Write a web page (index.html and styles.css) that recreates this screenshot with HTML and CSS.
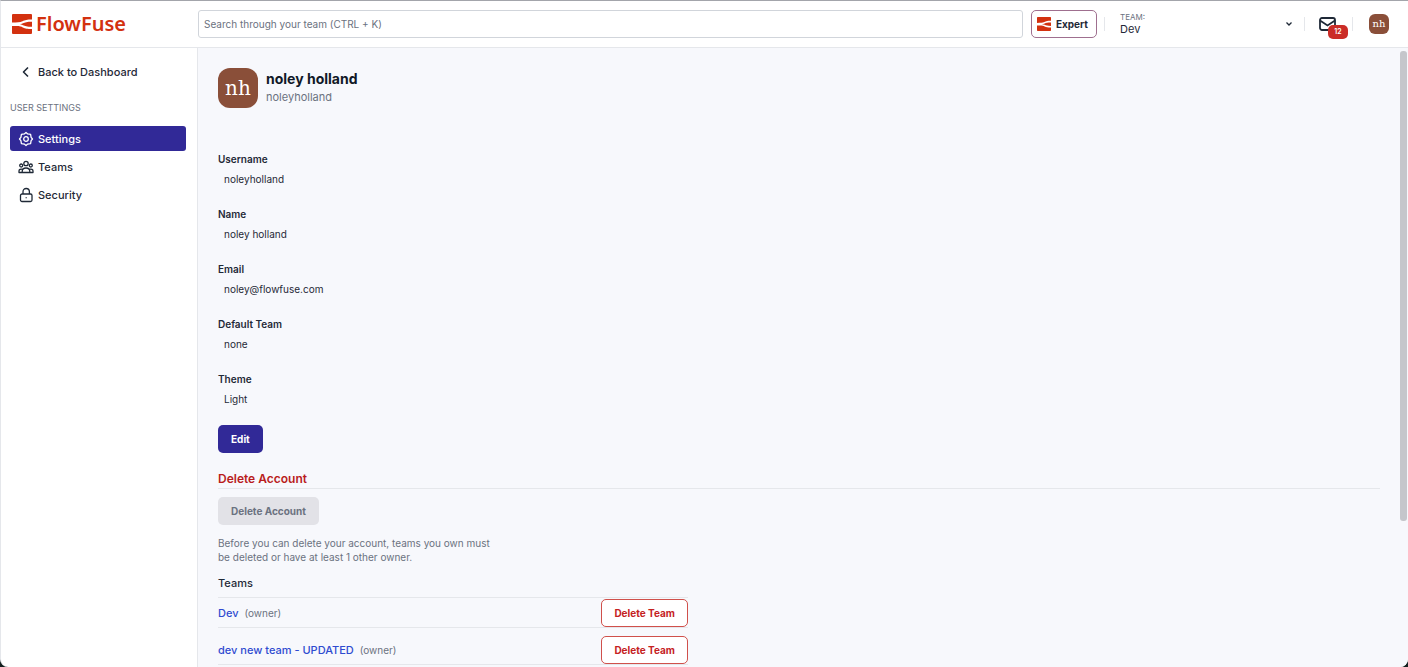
FILE: index.html
```html
<!DOCTYPE html>
<html lang="en">
<head>
  <meta charset="UTF-8" />
  <meta name="viewport" content="width=device-width, initial-scale=1.0" />
  <title>User Settings - FlowFuse</title>
  <link rel="stylesheet" href="styles.css">
</head>
<body>
  <svg class="sprite" aria-hidden="true">
    <symbol id="mark" viewBox="0 0 20 20">
      <path d="M1 0H19Q20 0 20 1V5.500C15 5.500 13 6 10.500 7.300C8 8.500 5 8.500 0 8.500V1Q0 0 1 0Z" />
      <path d="M20 7.800V12.800C15 12.800 13 12 11 11.200C9.500 10.600 8.500 10.400 7 10.300C8.500 10.200 9.500 10 11 9.300C13 8.400 15 7.800 20 7.800Z" />
      <path d="M0 12H4C8 12 9 12.500 11 13.500C13.500 14.800 15 15 20 15V19Q20 20 19 20H1Q0 20 0 19Z" />
    </symbol>
  </svg>

  <div class="app">
    <header class="topbar">
      <a class="logo" href="#">
        <svg class="logo-mark" aria-hidden="true"><use href="#mark" /></svg>
        <span>FlowFuse</span>
      </a>
      <input class="search" type="search" aria-label="Search" placeholder="Search through your team (CTRL + K)" />
      <button class="btn btn-expert" type="button">
        <svg class="expert-mark" aria-hidden="true"><use href="#mark" /></svg>
        Expert
      </button>
      <div class="team-picker">
        <label for="team">TEAM:</label>
        <select id="team">
          <option>Dev</option>
        </select>
        <svg class="chevron" viewBox="0 0 8 8" aria-hidden="true"><path d="M1.500 2.500L4 5L6.500 2.500" /></svg>
      </div>
      <button class="inbox" type="button" aria-label="Notifications">
        <svg viewBox="0 0 18 14" aria-hidden="true">
          <rect x="1" y="1" width="15" height="12" rx="2" />
          <path d="M1 3.500L8.500 8.500L16 3.500" />
        </svg>
        <span class="badge">12</span>
      </button>
      <button class="user-menu" type="button"><span class="avatar avatar-small">nh</span></button>
    </header>

    <div class="content">
      <nav class="sidebar">
        <a class="nav-item back" href="#">
          <svg viewBox="0 0 16 16" aria-hidden="true"><path d="M10 3.500L5.500 8L10 12.500" /></svg>
          Back to Dashboard
        </a>
        <h2>USER SETTINGS</h2>
        <a class="nav-item active" href="#">
          <svg viewBox="0 0 16 16" aria-hidden="true">
            <path d="M8 1.500L9.700 2.900L12.600 3.400L13.100 6.300L14.500 8L13.100 9.700L12.600 12.600L9.700 13.100L8 14.500L6.300 13.100L3.400 12.600L2.900 9.700L1.500 8L2.900 6.300L3.400 3.400L6.300 2.900Z" />
            <circle cx="8" cy="8" r="2.300" />
          </svg>
          Settings
        </a>
        <a class="nav-item" href="#">
          <svg viewBox="0 0 16 16" aria-hidden="true">
            <circle cx="8" cy="4.500" r="2.200" />
            <circle cx="3.200" cy="6.500" r="1.500" />
            <circle cx="12.800" cy="6.500" r="1.500" />
            <path d="M4.200 13.500V12.500C4.200 10.300 5.800 9 8 9S11.800 10.300 11.800 12.500V13.500ZM4.200 13.500H1V12C1 10.500 2.500 9.800 4.600 10.400M11.800 13.500H15V12C15 10.500 13.500 9.800 11.400 10.400" />
          </svg>
          Teams
        </a>
        <a class="nav-item" href="#">
          <svg viewBox="0 0 16 16" aria-hidden="true">
            <rect x="2.500" y="7" width="11.500" height="7.500" rx="1.500" />
            <path d="M5 7V4.700C5 2.700 6.200 1.500 8.200 1.500S11.400 2.700 11.400 4.700V7M8.200 10.200V11.300" />
          </svg>
          Security
        </a>
      </nav>

      <main class="page">
        <div class="profile">
          <span class="avatar">nh</span>
          <div>
            <h1>noley holland</h1>
            <p>noleyholland</p>
          </div>
        </div>

        <dl class="details">
          <div>
            <dt>Username</dt>
            <dd>noleyholland</dd>
          </div>
          <div>
            <dt>Name</dt>
            <dd>noley holland</dd>
          </div>
          <div>
            <dt>Email</dt>
            <dd>noley@flowfuse.com</dd>
          </div>
          <div>
            <dt>Default Team</dt>
            <dd>none</dd>
          </div>
          <div>
            <dt>Theme</dt>
            <dd>Light</dd>
          </div>
        </dl>
        <button class="btn btn-primary" type="button">Edit</button>

        <section class="delete-account">
          <h2>Delete Account</h2>
          <button class="btn" type="button" disabled>Delete Account</button>
          <p>Before you can delete your account, teams you own must be deleted or have at least 1 other owner.</p>
          <div class="teams">
            <h3>Teams</h3>
            <ul>
              <li>
                <a href="#">Dev</a>
                <span class="role">(owner)</span>
                <button class="btn btn-danger" type="button">Delete Team</button>
              </li>
              <li>
                <a href="#">dev new team - UPDATED</a>
                <span class="role">(owner)</span>
                <button class="btn btn-danger" type="button">Delete Team</button>
              </li>
            </ul>
          </div>
        </section>
      </main>
      <div class="scroll-thumb"></div>
    </div>
  </div>
</body>
</html>
```

FILE: styles.css
```css
* {
  box-sizing: border-box;
}

body {
  margin: 0;
  background: #14201f;
  color: #1f2937;
  font-family: Inter, "Liberation Sans", sans-serif;
  font-size: 10px;
  line-height: 14px;
}

h1, h2, h3, p, ul, dl, dd {
  margin: 0;
  padding: 0;
}

a {
  color: inherit;
  text-decoration: none;
}

button, input, select {
  font: inherit;
  color: inherit;
}

button {
  cursor: pointer;
}

.sprite {
  display: none;
}

.app {
  display: flex;
  flex-direction: column;
  height: 100vh;
  overflow: hidden;
  background: #fff;
  border-top: 1px solid #a3a5ab;
  border-left: 1px solid #e5e7eb;
  border-radius: 0 0 8px 8px;
}

/* Top bar */
.topbar {
  display: flex;
  align-items: center;
  height: 47px;
  padding: 0 13px 0 11px;
  border-bottom: 1px solid #e5e7eb;
}

.logo {
  display: flex;
  align-items: center;
  gap: 4px;
  width: 186px;
  color: #d3310f;
  font-family: "Noto Sans", "Open Sans", sans-serif;
  font-size: 20px;
  font-weight: 600;
}

.logo-mark {
  width: 20px;
  height: 20px;
  fill: #d3310f;
}

.search {
  flex: 1;
  height: 28px;
  padding: 0 5px;
  border: 1px solid #d1d5db;
  border-radius: 3px;
  background: #fff;
}

.search::placeholder {
  color: #6b7280;
  opacity: 1;
}

.btn {
  height: 28px;
  padding: 0 12px;
  border: 1px solid transparent;
  border-radius: 5px;
  font-weight: 700;
}

.btn-expert {
  display: flex;
  align-items: center;
  gap: 5px;
  margin-left: 8px;
  padding: 0 8px 0 5px;
  border-color: #9f6f8f;
  background: #fff;
}

.expert-mark {
  width: 14px;
  height: 14px;
  fill: #d3310f;
}

.team-picker {
  position: relative;
  display: flex;
  flex-direction: column;
  width: 200px;
  margin-left: 7px;
  padding-left: 16px;
}

.team-picker label {
  color: #6b7280;
  font-size: 8px;
  line-height: 10px;
}

.team-picker select {
  width: 100%;
  height: 14px;
  padding: 0;
  border: 0;
  background: none;
  appearance: none;
  font-size: 11px;
}

.chevron {
  position: absolute;
  top: 8px;
  right: 11px;
  width: 8px;
  height: 8px;
  fill: none;
  stroke: #1f2937;
  stroke-width: 1.3;
  pointer-events: none;
}

.team-picker,
.inbox,
.user-menu {
  background: linear-gradient(#e5e7eb, #e5e7eb) left center / 1px 14px no-repeat;
}

.inbox {
  position: relative;
  display: flex;
  width: 48px;
  padding: 0 0 0 15px;
  border: 0;
}

.inbox svg {
  width: 18px;
  height: 14px;
  fill: none;
  stroke: #1f2937;
  stroke-width: 1.8;
}

.badge {
  position: absolute;
  top: 8px;
  left: 24px;
  width: 20px;
  border-radius: 5px;
  background: #cb2c27;
  color: #fff;
  font-size: 7px;
  font-weight: 600;
}

.user-menu {
  padding: 0 6px 0 17px;
  border: 0;
}

.avatar {
  display: flex;
  align-items: center;
  justify-content: center;
  width: 40px;
  height: 40px;
  border-radius: 12px;
  background: #8a4f39;
  color: #fff;
  font-family: "DejaVu Serif", serif;
  font-size: 20px;
}

.avatar-small {
  width: 20px;
  height: 20px;
  border-radius: 6px;
  font-size: 10px;
}

/* Sidebar */
.content {
  position: relative;
  display: flex;
  flex: 1;
  min-height: 0;
}

.sidebar {
  display: flex;
  flex-direction: column;
  gap: 3px;
  width: 197px;
  padding: 11px 11px 0 9px;
  border-right: 1px solid #e5e7eb;
}

.sidebar h2 {
  margin: 14px 0 8px;
  color: #6b7280;
  font-size: 9px;
  font-weight: 400;
}

.nav-item {
  display: flex;
  align-items: center;
  gap: 4px;
  height: 25px;
  padding: 0 8px;
  border-radius: 3px;
  font-size: 11px;
  font-weight: 500;
}

.nav-item svg {
  width: 16px;
  height: 16px;
  fill: none;
  stroke: currentColor;
  stroke-width: 1.3;
  stroke-linejoin: round;
}

.back svg {
  stroke-width: 1.6;
}

.active {
  background: #312997;
  color: #fff;
}

/* User settings page */
.page {
  flex: 1;
  overflow: hidden;
  padding: 20px 28px 0 20px;
  background: #f7f8fc;
}

.profile {
  display: flex;
  align-items: center;
  gap: 8px;
  margin-bottom: 44px;
}

.profile h1 {
  color: #111827;
  font-size: 14px;
  font-weight: 700;
  line-height: 18px;
}

.profile p {
  color: #6b7280;
  font-size: 11px;
  line-height: 18px;
}

.details {
  display: grid;
  gap: 21px;
  margin-bottom: 19px;
}

.details dt {
  font-weight: 600;
}

.details dd {
  margin-top: 6px;
  padding-left: 6px;
}

.btn-primary {
  background: #312997;
  color: #fff;
}

.delete-account {
  margin-top: 17px;
}

.delete-account h2 {
  margin-bottom: 8px;
  border-bottom: 1px solid #e5e7eb;
  color: #b91c1c;
  font-size: 12px;
  font-weight: 600;
  line-height: 18px;
}

.delete-account p {
  max-width: 280px;
  margin: 11px 0 12px;
  color: #6b7280;
}

.btn:disabled {
  background: #e2e2e7;
  color: #6b7280;
  cursor: default;
}

.teams {
  width: 470px;
}

.teams h3 {
  padding-bottom: 7px;
  border-bottom: 1px solid #e5e7eb;
  font-size: 11px;
  font-weight: 500;
}

.teams li {
  display: flex;
  align-items: center;
  gap: 6px;
  padding-top: 1px;
  border-bottom: 1px solid #e5e7eb;
}

.teams li + li {
  padding-top: 8px;
}

.teams a {
  color: #2f4bd0;
  font-size: 11px;
  font-weight: 500;
}

.role {
  color: #6b7280;
}

.btn-danger {
  margin-left: auto;
  border-color: #d0504b;
  background: #fff;
  color: #c5221f;
}

.scroll-thumb {
  position: absolute;
  top: 3px;
  right: 1px;
  width: 7px;
  height: 76%;
  border-radius: 3px;
  background: #c5c6cb;
}
```
